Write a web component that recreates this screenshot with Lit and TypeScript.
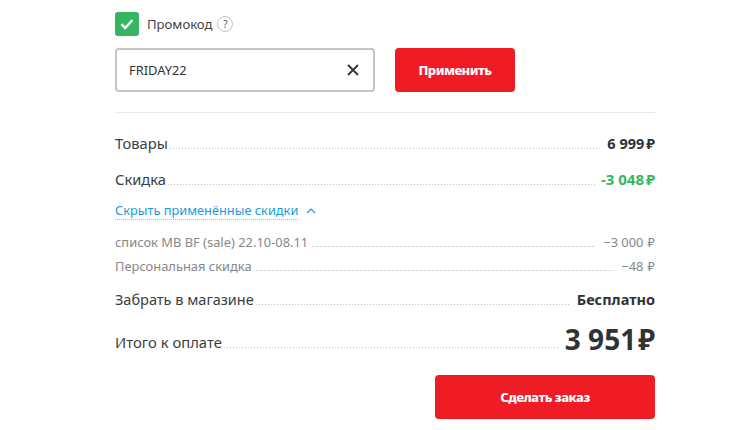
import { LitElement, html, css } from "lit";
import { customElement } from "lit/decorators.js";

@customElement("app-root")
export class AppRoot extends LitElement {
  static styles = css`
    :host {
      display: block;
      width: 747px;
      height: 430px;
      background: #fff;
      font-family: "Noto Sans", "Open Sans", sans-serif;
      color: #2f3336;
      overflow: hidden;
    }
    .wrap {
      width: 540px;
      margin-left: 115px;
      padding-top: 12px;
      display: flex;
      flex-direction: column;
    }
    .promo {
      display: flex;
      align-items: center;
      height: 24px;
      font-size: 13.1px;
      color: #444;
    }
    .check {
      width: 24px;
      height: 24px;
      border-radius: 3px;
      background: #35b660;
      display: flex;
      align-items: center;
      justify-content: center;
      margin-right: 8px;
    }
    .hint {
      width: 14px;
      height: 14px;
      border: 1px solid #c4c4c4;
      border-radius: 50%;
      margin-left: 5px;
      font-size: 10px;
      line-height: 14px;
      text-align: center;
      color: #555;
    }
    .form {
      display: flex;
      gap: 20px;
      margin-top: 12px;
      padding-bottom: 20px;
      border-bottom: 1px solid #e8e8e8;
    }
    .input {
      box-sizing: border-box;
      width: 260px;
      height: 44px;
      border: 2px solid #c4c4c4;
      border-radius: 4px;
      padding: 0 14px 0 12px;
      display: flex;
      align-items: center;
      justify-content: space-between;
      font-size: 12.9px;
      color: #333;
    }
    .btn {
      display: flex;
      align-items: center;
      justify-content: center;
      height: 44px;
      border-radius: 4px;
      background: #ef1c25;
      color: #fff;
      font-size: 13px;
      font-weight: 800;
      letter-spacing: -0.5px;
    }
    .apply {
      width: 120px;
    }
    .row {
      display: flex;
      align-items: baseline;
      font-size: 14.7px;
      color: #3a3e41;
    }
    .dots {
      flex: 1;
      height: 1px;
      margin: 0 4px 0 2px;
      background: linear-gradient(to right, #c2c2c2 1px, transparent 1px) 0 0 / 3px 1px repeat-x;
    }
    .val {
      display: flex;
      align-items: baseline;
      font-weight: 700;
      font-size: 14.5px;
      white-space: nowrap;
      margin-left: 2px;
      color: #2f3336;
    }
    .rub {
      margin-left: 2px;
    }
    .goods {
      margin-top: 20px;
    }
    .discount {
      margin-top: 16px;
    }
    .val.green {
      color: #35b660;
      font-size: 15px;
    }
    .toggle {
      display: flex;
      align-items: center;
      margin-top: 13px;
      font-size: 12.8px;
      color: #1a9bdb;
    }
    .toggle span {
      border-bottom: 1px dotted #8cc9e8;
      line-height: 17px;
    }
    .toggle svg {
      margin-left: 8px;
    }
    .sub {
      font-size: 12.9px;
      color: #85888a;
    }
    .sub .dots {
      margin: 0 5px 0 4px;
      background: linear-gradient(to right, #dcdcdc 3px, transparent 3px) 0 0 / 4px 1px repeat-x;
    }
    .sub .val {
      font-weight: 400;
      font-size: 12.9px;
      color: #85888a;
    }
    .sub .rub {
      margin-left: 4px;
    }
    .sub-first {
      margin-top: 13px;
    }
    .sub-second {
      margin-top: 6px;
    }
    .pickup {
      margin-top: 14px;
      font-size: 14.5px;
    }
    .total {
      margin-top: 12px;
      align-items: flex-end;
      font-size: 14.8px;
    }
    .total .label {
      line-height: 20px;
      margin-bottom: 5px;
    }
    .total .dots {
      margin-bottom: 9px;
    }
    .total .val {
      font-size: 28px;
      line-height: 36px;
    }
    .total .rub {
      margin-left: 2px;
    }
    .submit {
      width: 220px;
      align-self: flex-end;
      margin-top: 18px;
    }
  `;

  render() {
    return html`
      <div class="wrap">
        <div class="promo">
          <div class="check">
            <svg width="14" height="12" viewBox="0 0 14 12" fill="none">
              <path d="M1.5 6.2 5.2 10 12.5 2" stroke="#fff" stroke-width="2.4" />
            </svg>
          </div>
          Промокод
          <div class="hint">?</div>
        </div>
        <div class="form">
          <div class="input">
            FRIDAY22
            <svg width="12" height="12" viewBox="0 0 12 12" fill="none">
              <path d="M1 1 11 11M11 1 1 11" stroke="#333" stroke-width="1.8" />
            </svg>
          </div>
          <div class="btn apply">Применить</div>
        </div>
        <div class="row goods">
          Товары<span class="dots"></span><span class="val">6 999<span class="rub">₽</span></span>
        </div>
        <div class="row discount">
          Скидка<span class="dots"></span><span class="val green">-3 048<span class="rub">₽</span></span>
        </div>
        <div class="toggle">
          <span>Скрыть применённые скидки</span>
          <svg width="10" height="6" viewBox="0 0 10 6" fill="none">
            <path d="M1 5 5 1 9 5" stroke="#1a9bdb" stroke-width="1.2" />
          </svg>
        </div>
        <div class="row sub sub-first">
          список MB BF (sale) 22.10-08.11<span class="dots"></span><span class="val">−3 000<span class="rub">₽</span></span>
        </div>
        <div class="row sub sub-second">
          Персональная скидка<span class="dots"></span><span class="val">−48<span class="rub">₽</span></span>
        </div>
        <div class="row pickup">
          Забрать в магазине<span class="dots"></span><span class="val">Бесплатно</span>
        </div>
        <div class="row total">
          <span class="label">Итого к оплате</span><span class="dots"></span><span class="val">3 951<span class="rub">₽</span></span>
        </div>
        <div class="btn submit">Сделать заказ</div>
      </div>
    `;
  }
}
